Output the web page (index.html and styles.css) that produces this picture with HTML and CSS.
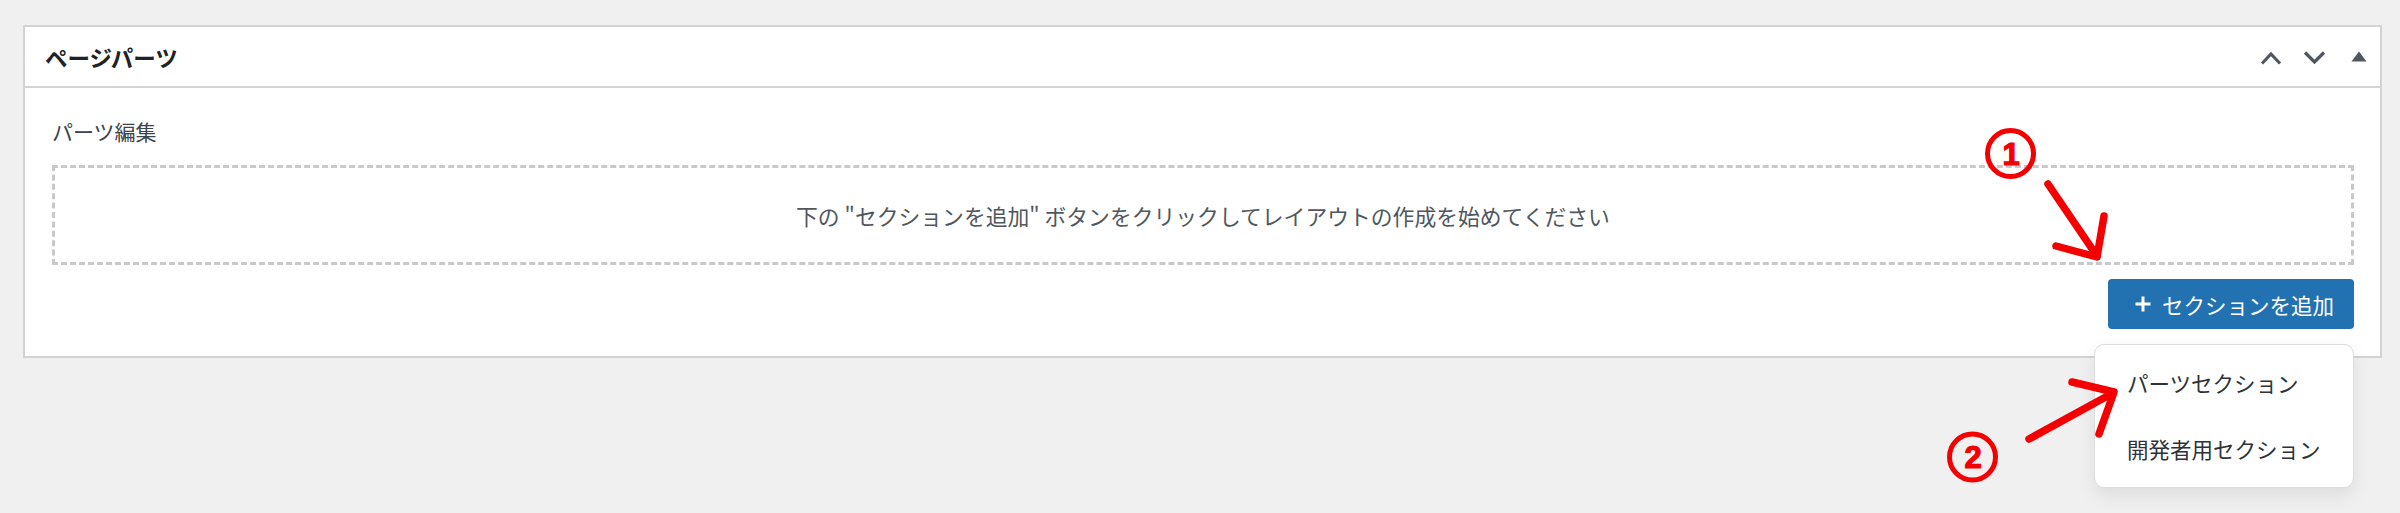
FILE: index.html
```html
<!DOCTYPE html>
<html lang="ja">
<head>
<meta charset="utf-8">
<title>ページパーツ</title>
<link rel="stylesheet" href="styles.css">
</head>
<body>
<div class="page">
  <div class="postbox">
    <div class="postbox-header">
      <h2 class="postbox-title">ページパーツ</h2>
      <div class="handle-actions">
        <button class="handle-btn" aria-label="上へ移動">
          <svg width="22" height="14" viewBox="0 0 22 14"><path d="M2 12.5 L11 3 L20 12.5" fill="none" stroke="#50575e" stroke-width="3.2"/></svg>
        </button>
        <button class="handle-btn" aria-label="下へ移動">
          <svg width="23" height="14" viewBox="0 0 23 14"><path d="M2 1.5 L11.5 11 L21 1.5" fill="none" stroke="#50575e" stroke-width="3.2"/></svg>
        </button>
        <button class="handle-btn toggle" aria-label="パネルを切り替え">
          <svg width="16" height="11" viewBox="0 0 16 11"><path d="M8 0.5 L15.5 10.5 L0.5 10.5 Z" fill="#50575e"/></svg>
        </button>
      </div>
    </div>
    <div class="postbox-inside">
      <div class="field-label">パーツ編集</div>
      <div class="layout-empty">下の "セクションを追加" ボタンをクリックしてレイアウトの作成を始めてください</div>
      <div class="actions">
        <div class="add-wrap">
          <button class="add-btn">
            <svg class="plus" width="16" height="16" viewBox="0 0 16 16"><path d="M8 0.5 V15.5 M0.5 8 H15.5" stroke="#fff" stroke-width="3"/></svg>
            <span>セクションを追加</span>
          </button>
          <ul class="menu">
            <li class="menu-item">パーツセクション</li>
            <li class="menu-item">開発者用セクション</li>
          </ul>
        </div>
      </div>
    </div>
  </div>
</div>
<svg class="annotations" width="2400" height="513" viewBox="0 0 2400 513">
  <g fill="none" stroke="#f50000" stroke-width="5">
    <circle cx="2010.5" cy="153.5" r="23"/>
    <circle cx="1972.5" cy="457" r="23"/>
  </g>
  <g fill="#f50000" stroke="#f50000" stroke-width="1.2" font-family="Liberation Sans, Arial, sans-serif" font-weight="700" font-size="31" text-anchor="middle">
    <text x="2011" y="165">1</text>
    <text x="1973" y="468">2</text>
  </g>
  <g fill="none" stroke="#f50000" stroke-width="7.5" stroke-linecap="round" stroke-linejoin="round">
    <path d="M2048 184 L2097 256"/>
    <path d="M2056 246 L2097 257 L2104 216"/>
    <path d="M2029 439 L2113 393"/>
    <path d="M2072 382 L2114 392 L2099 434"/>
  </g>
</svg>
</body>
</html>
```

FILE: styles.css
```css
* { box-sizing: border-box; }
html, body {
  margin: 0;
  padding: 0;
}
body {
  background: #f0f0f1;
  font-family: "Noto Sans CJK JP", "Noto Sans", sans-serif;
  color: #3c434a;
  width: 2400px;
  height: 513px;
  position: relative;
  overflow: hidden;
}
.page {
  padding: 25px 18px 0 23px;
}
.postbox {
  background: #fff;
  border: 2px solid #d2d3d5;
}
.postbox-header {
  height: 61px;
  border-bottom: 2px solid #d2d3d5;
  display: flex;
  align-items: center;
  justify-content: space-between;
  padding: 2px 13px 0 20px;
}
.postbox-title {
  margin: 0;
  font-size: 22.5px;
  font-weight: 700;
  color: #1d2327;
  line-height: 1;
}
.handle-actions {
  display: flex;
  align-items: center;
  gap: 0;
}
.handle-btn {
  border: 0;
  background: none;
  padding: 0;
  margin: 0;
  display: flex;
  align-items: center;
  justify-content: center;
  height: 30px;
}
.handle-btn:first-child { margin-right: 21px; }
.handle-btn:nth-child(2) { margin-right: 25px; }
.handle-btn.toggle { margin-top: -3px; }
.postbox-inside {
  padding: 28px 26px 27px 27px;
}
.field-label {
  font-size: 21px;
  line-height: 30px;
  height: 30px;
  color: #3c434a;
}
.layout-empty {
  margin-top: 19px;
  height: 100px;
  border: 3px dashed #c8c9cb;
  display: flex;
  align-items: center;
  justify-content: center;
  font-size: 21.8px;
  color: #50575e;
}
.actions {
  margin-top: 14px;
  display: flex;
  justify-content: flex-end;
}
.add-wrap {
  position: relative;
}
.add-btn {
  height: 50px;
  width: 246px;
  background: #2271b1;
  border: 0;
  border-radius: 4px;
  color: #fff;
  font-family: "Noto Sans CJK JP", "Noto Sans", sans-serif;
  font-size: 21.5px;
  display: flex;
  align-items: center;
  padding: 0 0 0 27px;
  gap: 11px;
}
.add-btn span {
  line-height: 1;
  margin-top: 1px;
}
.plus { flex: none; }
.menu {
  position: absolute;
  right: 0;
  top: 65px;
  width: 260px;
  margin: 0;
  padding: 4px 0 6px;
  list-style: none;
  background: #fff;
  border: 1px solid #dcdcde;
  border-radius: 10px;
  box-shadow: 0 8px 18px rgba(0, 0, 0, 0.08);
}
.menu-item {
  height: 66px;
  display: flex;
  align-items: center;
  padding-left: 32px;
  font-size: 21.5px;
  color: #2c3338;
}
.annotations {
  position: absolute;
  top: 0;
  left: 0;
  pointer-events: none;
}
```
